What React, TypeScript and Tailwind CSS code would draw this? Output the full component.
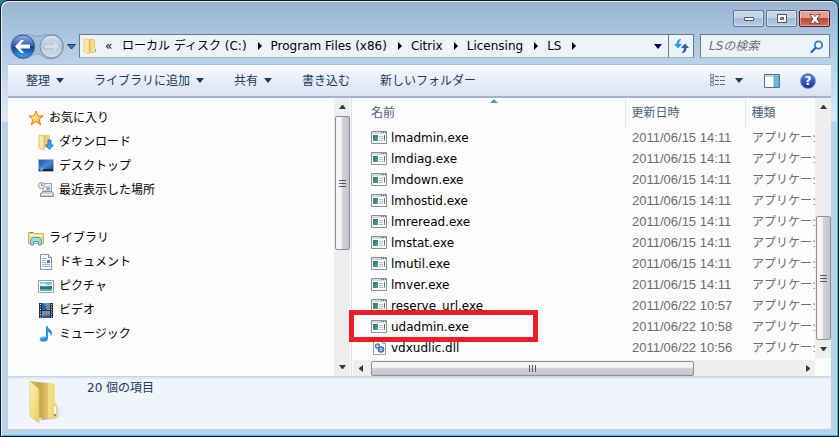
import type { ReactNode } from 'react'

type FileRow = { name: string; date: string; kind: 'exe' | 'dll'; marked?: boolean }

const files: FileRow[] = [
  { name: 'lmadmin.exe', date: '2011/06/15 14:11', kind: 'exe' },
  { name: 'lmdiag.exe', date: '2011/06/15 14:11', kind: 'exe' },
  { name: 'lmdown.exe', date: '2011/06/15 14:11', kind: 'exe' },
  { name: 'lmhostid.exe', date: '2011/06/15 14:11', kind: 'exe' },
  { name: 'lmreread.exe', date: '2011/06/15 14:11', kind: 'exe' },
  { name: 'lmstat.exe', date: '2011/06/15 14:11', kind: 'exe' },
  { name: 'lmutil.exe', date: '2011/06/15 14:11', kind: 'exe' },
  { name: 'lmver.exe', date: '2011/06/15 14:11', kind: 'exe' },
  { name: 'reserve_url.exe', date: '2011/06/22 10:57', kind: 'exe' },
  { name: 'udadmin.exe', date: '2011/06/22 10:58', kind: 'exe', marked: true },
  { name: 'vdxudlic.dll', date: '2011/06/22 10:56', kind: 'dll' },
]

const crumbs = ['ローカル ディスク (C:)', 'Program Files (x86)', 'Citrix', 'Licensing', 'LS']

function Caret({ className = '' }: { className?: string }) {
  return (
    <svg className={className} width="8" height="5" viewBox="0 0 8 5" fill="currentColor" aria-hidden="true">
      <path d="M0 0h8L4 5z" />
    </svg>
  )
}

function ExeIcon() {
  return (
    <svg width="16" height="13" viewBox="0 0 16 13" aria-hidden="true">
      <defs>
        <linearGradient id="exe" x1="0" y1="0" x2="1" y2="1">
          <stop offset="0" stopColor="#3563a8" />
          <stop offset="1" stopColor="#4fb45c" />
        </linearGradient>
      </defs>
      <path d="M.5.5h15v12H.5z" fill="#fdfdfd" stroke="#8b9096" />
      <path d="M1 1h14v2H1z" fill="#d3dce6" />
      <path d="M10 1h1v1h-1zM12 1h1v1h-1zM14 1h1v1h-1z" fill="#59697d" />
      <path d="M2 4h5v6H2z" fill="url(#exe)" />
      <path d="M8 5h4v1H8zM8 7h4v1H8zM8 9h4v1H8z" fill="#b9bdc3" />
      <path d="M13 4h1v4h-1z" fill="#3d7d9c" />
      <path d="M13 8h1v2h-1z" fill="#55b06b" />
    </svg>
  )
}

function DllIcon() {
  return (
    <svg width="13" height="15" viewBox="0 0 13 15" aria-hidden="true">
      <path d="M.5.5h9l3 3v11H.5z" fill="#fcfcfd" stroke="#9a9fa6" />
      <path d="M9.5.5v3h3" fill="#e3e8ee" stroke="#9a9fa6" />
      <circle cx="4.5" cy="6" r="2" fill="#dce8f6" stroke="#4879b8" strokeWidth="1.4" />
      <circle cx="8" cy="9.500" r="2.500" fill="#dce8f6" stroke="#3f6fae" strokeWidth="1.600" />
      <circle cx="8" cy="9.500" r=".8" fill="#3f6fae" />
    </svg>
  )
}

function FolderSmall() {
  return (
    <svg width="14" height="16" viewBox="0 0 14 16" aria-hidden="true">
      <path d="M5 1h6l1 1v12l-2 1H5z" fill="#e5c665" />
      <path d="M1 1l5 1v14l-5-2z" fill="#fbeaa2" stroke="#dcbb62" strokeWidth=".6" />
      <path d="M8 2h3v12H8z" fill="#f5df8c" />
      <path d="M11 9h2v5h-2z" fill="#f1e3ae" />
      <path d="M12 11h1v3h-1z" fill="#5ab2e6" />
    </svg>
  )
}

function StarIcon() {
  return (
    <svg width="16" height="16" viewBox="0 0 16 16" aria-hidden="true">
      <defs>
        <linearGradient id="star" x1="0" y1="0" x2="1" y2="1">
          <stop offset="0" stopColor="#f9d65c" />
          <stop offset=".4" stopColor="#fdec84" />
          <stop offset="1" stopColor="#f08a12" />
        </linearGradient>
      </defs>
      <path d="M8 1l2 5h5.300l-4.300 3.300 1.700 5.400L8 11.500l-4.700 3.200L5 9.300.7 6H6z" fill="url(#star)" stroke="#e2791b" strokeLinejoin="round" />
    </svg>
  )
}

function DownloadIcon() {
  return (
    <svg width="16" height="16" viewBox="0 0 16 16" aria-hidden="true">
      <path d="M5 1h6l1 1v12H5z" fill="#e8cc74" />
      <path d="M1 1l5 1v14l-5-2z" fill="#fae9a4" stroke="#d2b25c" strokeWidth=".7" />
      <path d="M10 6h3v5h2.500l-4 4.500-4-4.500H10z" fill="#3fa4ea" stroke="#1c6fc0" strokeWidth=".8" />
    </svg>
  )
}

function DesktopIcon() {
  return (
    <svg width="16" height="14" viewBox="0 0 16 14" aria-hidden="true">
      <defs>
        <linearGradient id="desk" x1="0" y1="0" x2="1" y2="1">
          <stop offset="0" stopColor="#1a4fa5" />
          <stop offset=".5" stopColor="#4b88d6" />
          <stop offset="1" stopColor="#123b83" />
        </linearGradient>
      </defs>
      <path d="M.5.5h15v12H.5z" fill="url(#desk)" stroke="#a9b6c8" />
      <path d="M1 10h14v2H1z" fill="#17243b" />
      <circle cx="3.500" cy="10" r="2" fill="#2c9be0" />
      <path d="M2.500 9.500h1v1h-1z" fill="#f4c430" />
      <path d="M4 8.500h1v1H4z" fill="#8ed163" />
    </svg>
  )
}

function RecentIcon() {
  return (
    <svg width="16" height="16" viewBox="0 0 16 16" aria-hidden="true">
      <path d="M5 1.500h8.500v9H5z" fill="#eef1f4" stroke="#9aa0a7" />
      <path d="M7 4h5v1H7zM7 8h5v1H7z" fill="#b8bec6" />
      <path d="M8 5.500h4v2H8z" fill="#4aa0e6" />
      <path d="M2.500 11.500L5 9.500h9l1.500 2v3h-13z" fill="#c9cdd2" stroke="#8b9096" />
      <path d="M4 12h10v1H4z" fill="#f5f6f7" />
      <circle cx="3.500" cy="3.500" r="3" fill="#f7f9fb" stroke="#8f959c" />
      <path d="M3.500 1.500v2h1.500" stroke="#4a5460" fill="none" strokeWidth=".8" />
    </svg>
  )
}

function LibraryIcon() {
  return (
    <svg width="16" height="15" viewBox="0 0 16 15" aria-hidden="true">
      <path d="M.5 1.500h5l1 1h9v10H.5z" fill="#f5df8e" stroke="#d1b154" />
      <path d="M2 1h3v1H2z" fill="#46a832" />
      <path d="M1 4h14v1H1z" fill="#fdf5c4" />
      <path d="M2.500 14V9l2-2.500h7l2 2.500v5h-3v-3.500h-5V14z" fill="#9fd8f3" stroke="#4c9fc9" />
    </svg>
  )
}

function DocumentIcon() {
  return (
    <svg width="16" height="16" viewBox="0 0 16 16" aria-hidden="true">
      <path d="M2.500.5h8l3 3v12h-11z" fill="#fdfdfe" stroke="#8d939b" />
      <path d="M10.500.5v3h3" fill="#dce3ea" stroke="#8d939b" />
      <path d="M4 4h5v1H4zM4 6h4v1H4zM4 8h4v1H4zM4 10h8v1H4zM4 12h8v1H4z" fill="#a9b3d8" />
      <path d="M9 6h3v3H9z" fill="#3b7cc9" />
    </svg>
  )
}

function PictureIcon() {
  return (
    <svg width="16" height="13" viewBox="0 0 16 13" aria-hidden="true">
      <path d="M.5.5h15v12H.5z" fill="#fff" stroke="#9a9fa6" />
      <path d="M2 2h12v9H2z" fill="#74bdea" />
      <path d="M2 4l4-1 4 2 4-1v2H2z" fill="#d9effa" />
      <path d="M2 6l4 .5 8-.5v3H2z" fill="#2c7a5b" />
      <path d="M2 9h12v2H2z" fill="#55a9c9" />
    </svg>
  )
}

function VideoIcon() {
  return (
    <svg width="14" height="15" viewBox="0 0 14 15" aria-hidden="true">
      <path d="M0 0h14v15H0z" fill="#2b2f36" />
      <path d="M3 0h8v7H3zM3 8h8v7H3z" fill="#4a9fdd" />
      <path d="M3 0l3 2 2 5H3zM3 15l3-5 2 2 3-1v4z" fill="#245fae" />
      <path d="M7 1l3 1 1 4-3-1zM6 9l3 1-1 3-3-1z" fill="#c66a48" />
      <path d="M1.500 1v14M12.500 1v14" stroke="#e4e7ea" strokeDasharray="1 1.500" />
    </svg>
  )
}

function MusicIcon() {
  return (
    <svg width="14" height="16" viewBox="0 0 14 16" aria-hidden="true">
      <path d="M7 0h1.500c.3 2.500 4.500 3.500 4.500 7 0 1.600-.7 2.600-1.500 3.500.4-2.400-.5-4-2.500-4.500v6.500c0 2-1.800 3.300-4.300 3.300S.7 14.800.7 13.300c0-1.800 1.800-2.800 3.800-2.800 1 0 1.900.2 2.500.6z" fill="#2a94df" />
      <path d="M2 13c.3-1.200 1.600-1.700 3-1.600" stroke="#a7dcf9" fill="none" />
    </svg>
  )
}

function BigFolder() {
  return (
    <svg width="42" height="44" viewBox="0 0 42 44" aria-hidden="true">
      <defs>
        <linearGradient id="bigFront" x1="0" y1="0" x2="1" y2="1">
          <stop offset="0" stopColor="#fff3bd" />
          <stop offset="1" stopColor="#eccb62" />
        </linearGradient>
        <linearGradient id="bigBack" x1="0" y1="0" x2="1" y2="0">
          <stop offset="0" stopColor="#d8b954" />
          <stop offset=".4" stopColor="#c9a748" />
          <stop offset="1" stopColor="#f5e08d" />
        </linearGradient>
        <linearGradient id="bigShade" x1="0" y1="0" x2="1" y2="0">
          <stop offset="0" stopColor="#8f939d" />
          <stop offset="1" stopColor="#f1f5fb" stopOpacity="0" />
        </linearGradient>
      </defs>
      <path d="M12 40l16-1 13-10-9-3z" fill="url(#bigShade)" />
      <path d="M2 1l25 3v33l-4 2-12-1z" fill="url(#bigBack)" />
      <path d="M20 3l7 1v33l-7 1z" fill="#f3dc83" />
      <path d="M2 1l9 8v34l-9-7z" fill="url(#bigFront)" stroke="#dfc167" strokeWidth=".7" />
      <path d="M25 25l2-2 2 2v12l-4 1z" fill="#f4dc86" stroke="#d9b95c" strokeWidth=".6" />
      <path d="M26 27h2v8h-2z" fill="#fff" />
      <path d="M26 34h2v2h-2z" fill="#45a7e8" />
    </svg>
  )
}

function CaptionButton({ label, close, children }: { label: string; close?: boolean; children: ReactNode }) {
  const tone = close
    ? 'border-[#5a1a1c] bg-linear-to-b from-[#e0a093] from-45% via-[#c04a35] via-50% to-[#d07058]'
    : 'border-[#5f7188] bg-linear-to-b from-[#c3d5e9] from-45% via-[#a3bad4] via-50% to-[#b7cde6]'
  return (
    <button aria-label={label} className={`flex h-[17px] w-[31px] items-center justify-center rounded-xs border shadow-[inset_0_0_0_1px_rgba(255,255,255,0.4)] ${tone}`}>
      {children}
    </button>
  )
}

function NavItem({ icon, children, top }: { icon: ReactNode; children: ReactNode; top?: boolean }) {
  return (
    <a href="#" className={`flex h-6 items-center gap-[5px] ${top ? 'pl-5' : 'pl-[30px]'}`}>
      <span className="flex w-4 justify-center">{icon}</span>
      {children}
    </a>
  )
}

function ArrowUp() {
  return (
    <svg width="7" height="4" viewBox="0 0 7 4" aria-hidden="true">
      <path d="M3 0h1l3 4H0z" fill="#33383e" />
    </svg>
  )
}

function ArrowDown() {
  return (
    <svg width="7" height="4" viewBox="0 0 7 4" aria-hidden="true">
      <path d="M0 0h7L4 4H3z" fill="#33383e" />
    </svg>
  )
}

function VThumb({ className }: { className: string }) {
  return (
    <div className={`flex w-[15px] items-center justify-center rounded-xs border border-[#8e8e90] bg-linear-to-r from-[#f6f6f6] from-40% via-[#d2d2d6] via-50% to-[#c6c6ca] ${className}`}>
      <svg width="7" height="8" viewBox="0 0 7 8" aria-hidden="true">
        <path d="M0 1.500h7M0 4.500h7M0 7.500h7" stroke="#55585c" />
      </svg>
    </div>
  )
}

export default function App() {
  return (
    <div className="min-h-screen bg-[#1b8a94] font-['DejaVu_Sans','Noto_Sans_CJK_JP',sans-serif] text-xs text-black">
      <div className="flex min-h-screen flex-col rounded-t-lg border border-[#17181c] bg-[linear-gradient(to_bottom,#9ab4d3_0,#b9d1ea_60px,#dfe9f5_120px,#b9d1ea_121px)] px-[7px] pb-[7px] shadow-[inset_1px_1px_0_#e8f2fc,inset_-1px_-1px_0_#30c5e6]">
        <header>
          <div className="flex h-[33px] items-start justify-end gap-0.5 pt-[9px] pr-px">
            <CaptionButton label="最小化">
              <svg width="12" height="6" viewBox="0 0 12 6">
                <path d="M1.500 1.500h9v3h-9z" fill="#fff" stroke="#4c5563" />
              </svg>
            </CaptionButton>
            <CaptionButton label="最大化">
              <svg width="12" height="10" viewBox="0 0 12 10">
                <path d="M1.500.5h9v8h-9zM4.500 3.500v2h3v-2z" fill="#fff" fillRule="evenodd" stroke="#4c5563" />
              </svg>
            </CaptionButton>
            <CaptionButton label="閉じる" close>
              <svg width="12" height="10" viewBox="0 0 12 10">
                <path d="M1 .5h3l2 2 2-2h3L8 5l3 4.500H8l-2-2-2 2H1L4 5z" fill="#fff" stroke="#4f4a55" strokeWidth=".9" />
              </svg>
            </CaptionButton>
          </div>

          <div className="flex h-[30px] items-start">
            <svg width="71" height="26" viewBox="0 0 71 26" aria-hidden="true" className="shrink-0">
              <defs>
                <linearGradient id="back" x1="0" y1="0" x2="0" y2="1">
                  <stop offset="0" stopColor="#8fb2e4" />
                  <stop offset=".48" stopColor="#2c5cb4" />
                  <stop offset=".52" stopColor="#0f3a94" />
                  <stop offset="1" stopColor="#39b2f2" />
                </linearGradient>
                <linearGradient id="fwd" x1="0" y1="0" x2="0" y2="1">
                  <stop offset="0" stopColor="#dbe6f2" />
                  <stop offset=".5" stopColor="#b3c6da" />
                  <stop offset="1" stopColor="#d5e3f1" />
                </linearGradient>
              </defs>
              <path d="M15 0c8 0 8 2 14 2s6-2 14-2a12.500 12.500 0 010 25c-8 0-8-5-14-5s-6 5-14 5a12.500 12.500 0 010-25z" fill="#a4bcd8" stroke="#7f98b6" strokeWidth=".7" />
              <circle cx="15" cy="12.500" r="11.500" fill="url(#back)" stroke="#33507f" />
              <path d="M16 6h-3l-6 6.500 6 6.500h3l-3.500-4.500H22v-4h-9.500z" fill="#fff" />
              <circle cx="43.500" cy="12.500" r="11.500" fill="url(#fwd)" stroke="#7088a5" />
              <path d="M42.500 6h3l6 6.500-6 6.500h-3l3.500-4.500h-9.500v-4H46z" fill="#d3dfec" stroke="#a9bdd2" strokeWidth=".6" />
              <path d="M59.500 10.500h8l-4 4.500z" fill="#2d7fc0" stroke="#1d3f6e" />
            </svg>

            <div className="flex h-6 min-w-0 flex-1 items-center border border-[#6c7a85] border-b-[#a3b3a8] bg-[#edf3fb]">
              <span className="pl-[3px]"><FolderSmall /></span>
              <span className="w-[25px] pl-2">«</span>
              <nav aria-label="パス" className="flex flex-1 items-center overflow-hidden whitespace-nowrap">
                {crumbs.map((crumb) => (
                  <span key={crumb} className="flex items-center">
                    <a href="#">{crumb}</a>
                    <svg width="24" height="8" viewBox="0 0 24 8" aria-hidden="true">
                      <path d="M11 0l4 4-4 4z" />
                    </svg>
                  </span>
                ))}
              </nav>
              <button aria-label="履歴" className="px-1.5 text-[#00005a]">
                <Caret />
              </button>
              <button aria-label="最新の情報に更新" className="flex h-full w-[25px] items-center justify-center border-l border-[#6c7a85]">
                <svg width="15" height="14" viewBox="0 0 15 14">
                  <path d="M7 0C4 0 2.500 2 2.500 5H0l4 4.500L8 5H5.200C5.200 3 5.500 1.500 7 1z" fill="#2aa3e0" />
                  <path d="M8 14c3 0 4.500-2 4.500-5H15l-4-4.500L7 9h2.800c0 2-.3 3.500-1.800 4z" fill="#2f62ab" />
                </svg>
              </button>
            </div>

            <div className="ml-[6px] mr-px flex h-6 w-[130px] shrink-0 items-center border border-[#6c7a85] border-b-[#a3b3a8] bg-[#edf3fb]">
              <input aria-label="LSの検索" placeholder="LSの検索" className="min-w-0 flex-1 bg-transparent pl-2 outline-none placeholder:text-[#6d6d6d] placeholder:italic" />
              <svg width="14" height="13" viewBox="0 0 14 13" className="mr-[5px]" aria-hidden="true">
                <circle cx="8.500" cy="5" r="3.700" fill="#f4f9fe" stroke="#3a7cc4" strokeWidth="1.800" />
                <path d="M5.500 8L1.500 12" stroke="#2a62a8" strokeWidth="2.200" strokeLinecap="round" />
              </svg>
            </div>
          </div>

          <div className="flex h-[34px] items-center gap-[30px] border-b-2 border-t border-b-[#a0b4d0] border-t-[#a9bfd9] bg-linear-to-b from-[#f8fbfe] from-5% via-[#e5eef9] via-50% to-[#dae5f4] pl-[18px] pr-[15px] whitespace-nowrap text-[#1e395b]">
            <button className="flex items-center gap-1.5">整理<Caret /></button>
            <button className="flex items-center gap-1.5">ライブラリに追加<Caret /></button>
            <button className="flex items-center gap-1.5">共有<Caret /></button>
            <button>書き込む</button>
            <button>新しいフォルダー</button>
            <div className="ml-auto flex items-center">
              <button aria-label="表示方法の変更" className="flex items-center gap-2.5">
                <svg width="16" height="13" viewBox="0 0 16 13">
                  <path d="M1.500.5h3v3h-3zM1.500 4.500h3v3h-3zM1.500 8.500h3v3h-3z" fill="#fff" stroke="#7e8da3" />
                  <path d="M2.500 1.500h1v1h-1z" fill="#4a7bbf" />
                  <path d="M2.500 5.500h1v1h-1z" fill="#d0392e" />
                  <path d="M2.500 9.500h1v1h-1z" fill="#4a7bbf" />
                  <path d="M6 2.500h4M11 2.500h5M6 6.500h4M11 6.500h5M6 10.500h4M11 10.500h5" stroke="#5c6c84" />
                </svg>
                <Caret />
              </button>
              <button aria-label="プレビュー ウィンドウ" className="ml-[21px]">
                <svg width="16" height="14" viewBox="0 0 16 14">
                  <path d="M.5.5h15v13H.5z" fill="#fff" stroke="#5b6c82" />
                  <path d="M1 1h14v2H1z" fill="#c6d5e6" />
                  <path d="M10 2h5v11h-5z" fill="#6fc0dc" stroke="#4a8aa8" strokeWidth=".6" />
                </svg>
              </button>
              <button aria-label="ヘルプ" className="ml-5 flex size-4 items-center justify-center rounded-full border border-[#8690a6] bg-linear-to-b from-[#5a7fd8] to-[#122f9c] text-xs font-bold leading-none text-white">
                ?
              </button>
            </div>
          </div>
        </header>

        <main className="flex flex-1 bg-[#fcfcfc]">
          <aside className="flex w-[344px] shrink-0 border-r border-[#d6e3f2]">
            <nav aria-label="ナビゲーション" className="flex flex-1 flex-col gap-6 pt-2">
              <div>
                <NavItem top icon={<StarIcon />}>お気に入り</NavItem>
                <NavItem icon={<DownloadIcon />}>ダウンロード</NavItem>
                <NavItem icon={<DesktopIcon />}>デスクトップ</NavItem>
                <NavItem icon={<RecentIcon />}>最近表示した場所</NavItem>
              </div>
              <div>
                <NavItem top icon={<LibraryIcon />}>ライブラリ</NavItem>
                <NavItem icon={<DocumentIcon />}>ドキュメント</NavItem>
                <NavItem icon={<PictureIcon />}>ピクチャ</NavItem>
                <NavItem icon={<VideoIcon />}>ビデオ</NavItem>
                <NavItem icon={<MusicIcon />}>ミュージック</NavItem>
              </div>
            </nav>
            <div className="mr-px flex w-4 flex-col items-center bg-[#eeeeee]">
              <span className="flex h-[18px] items-center"><ArrowUp /></span>
              <VThumb className="h-[134px]" />
              <span className="mt-auto flex h-[18px] items-center"><ArrowDown /></span>
            </div>
          </aside>

          <section className="flex min-w-0 flex-1 flex-col">
            <div className="flex">
              <div className="min-w-0 flex-1">
                <table className="w-full table-fixed border-collapse">
                  <colgroup>
                    <col />
                    <col className="w-[120px]" />
                    <col className="w-[70px]" />
                  </colgroup>
                  <thead>
                    <tr className="h-[29px] text-left text-[#4c607a]">
                      <th className="relative pl-[19px] font-normal">
                        名前
                        <svg className="absolute top-px left-[138px]" width="8" height="4" viewBox="0 0 8 4" aria-hidden="true">
                          <path d="M4 0l4 4H0z" fill="#4f9bbd" />
                        </svg>
                      </th>
                      <th className="border-l border-[#dceaf8] pl-1.5 font-normal">更新日時</th>
                      <th className="border-l border-[#dceaf8] pl-1.5 font-normal">種類</th>
                    </tr>
                  </thead>
                  <tbody>
                    {files.map((file) => (
                      <tr key={file.name} className="h-[21px]">
                        <td className="relative pl-[19px]">
                          <span className="flex items-center gap-1">
                            <span className="flex w-4 justify-center">{file.kind === 'exe' ? <ExeIcon /> : <DllIcon />}</span>
                            {file.name}
                          </span>
                          {file.marked && <span className="absolute -top-1.5 -left-[3px] z-10 h-8 w-[189px] border-5 border-[#ee1c24]" />}
                        </td>
                        <td className="pl-[7px] font-['Liberation_Sans',sans-serif] text-[13px] whitespace-nowrap text-[#6d6d6d]">{file.date}</td>
                        <td className="overflow-hidden pl-[7px] whitespace-nowrap text-[#6d6d6d]">アプリケーション</td>
                      </tr>
                    ))}
                  </tbody>
                </table>
              </div>
              <div className="flex w-4 shrink-0 flex-col items-center bg-[#eeeeee]">
                <span className="flex h-[18px] items-center"><ArrowUp /></span>
                <VThumb className="mt-auto h-[124px]" />
                <span className="flex h-[18px] items-center"><ArrowDown /></span>
              </div>
            </div>
            <div className="mt-auto mr-4 ml-px flex h-4 items-center bg-[#eeeeee]">
              <svg width="18" height="7" viewBox="0 0 18 7" aria-hidden="true">
                <path d="M10 0v7L6 4V3z" fill="#33383e" />
              </svg>
              <div className="flex h-[15px] w-[70%] items-center justify-center rounded-xs border border-[#8e8e90] bg-linear-to-b from-[#f6f6f6] from-40% via-[#d2d2d6] via-50% to-[#c6c6ca]">
                <svg width="9" height="7" viewBox="0 0 9 7" aria-hidden="true">
                  <path d="M1.500 0v7M4.500 0v7M7.500 0v7" stroke="#55585c" />
                </svg>
              </div>
              <svg width="13" height="7" viewBox="0 0 13 7" className="ml-auto" aria-hidden="true">
                <path d="M4 0l4 3v1L4 7z" fill="#33383e" />
              </svg>
            </div>
          </section>
        </main>

        <footer className="flex h-[53px] items-start border-t border-[#c3d4ea] bg-[#f1f5fb] pt-[3px] pl-5 text-[#1e395b] shadow-[inset_0_2px_1px_#dfe8f5]">
          <BigFolder />
          <p className="pl-[17px] leading-4">20 個の項目</p>
        </footer>
      </div>
    </div>
  )
}
